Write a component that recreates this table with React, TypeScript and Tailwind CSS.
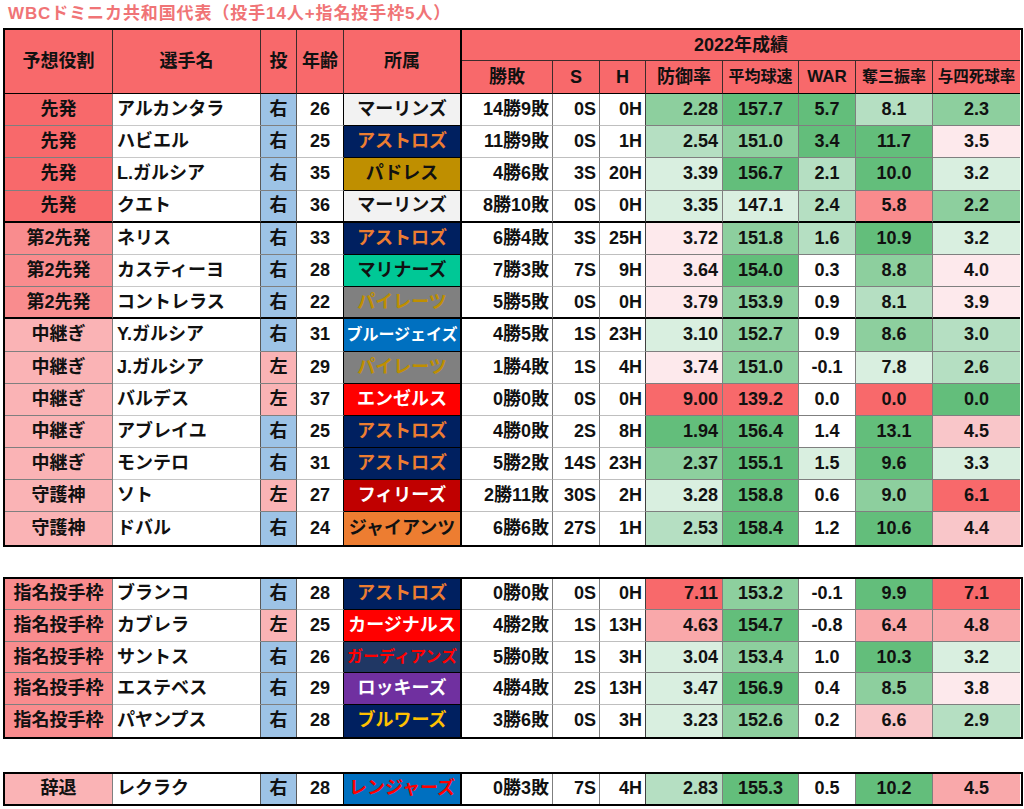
import React from "react";

type Row = [string, string, string, number, string, string, string, string, string, string, string, string, string, string];

const ROLE: Record<string, string> = {
  先発: "bg-[#f8696b]",
  第2先発: "bg-[#f98c8e]",
  中継ぎ: "bg-[#fab3b5]",
  守護神: "bg-[#fab3b5]",
  指名投手枠: "bg-[#f98c8e]",
  辞退: "bg-[#fab3b5]",
};

const TEAM: Record<string, string> = {
  マーリンズ: "bg-[#f2f2f2] text-[#111]",
  アストロズ: "bg-[#002060] text-[#ed7d31]",
  パドレス: "bg-[#bf8f00] text-[#111]",
  マリナーズ: "bg-[#00c896] text-[#111]",
  パイレーツ: "bg-[#808080] text-[#bf8f00]",
  ブルージェイズ: "bg-[#0070c0] text-white text-[16px]",
  エンゼルス: "bg-[#ff0000] text-white",
  フィリーズ: "bg-[#c00000] text-white",
  ジャイアンツ: "bg-[#ed7d31] text-[#111]",
  カージナルス: "bg-[#ff0000] text-white",
  ガーディアンズ: "bg-[#203764] text-[#ff0000] text-[16px]",
  ロッキーズ: "bg-[#7030a0] text-white",
  ブルワーズ: "bg-[#002060] text-[#ffc000]",
  レンジャーズ: "bg-[#0070c0] text-[#ff0000]",
};

// excel colour scale, green -> white -> red
const LV: Record<string, string> = {
  g4: "bg-[#63be7b]",
  g3: "bg-[#8dcf9e]",
  g2: "bg-[#b5dfc2]",
  g1: "bg-[#d9efe0]",
  w: "bg-white",
  p1: "bg-[#fde9ec]",
  p2: "bg-[#f9c6c9]",
  p3: "bg-[#f9a8aa]",
  r3: "bg-[#f98b8d]",
  r4: "bg-[#f8696b]",
};

const MAIN: Row[] = [
  ["先発", "アルカンタラ", "右", 26, "マーリンズ", "14勝9敗", "0S", "0H", "2.28", "157.7", "5.7", "8.1", "2.3", "g3 g4 g4 g2 g3"],
  ["先発", "ハビエル", "右", 25, "アストロズ", "11勝9敗", "0S", "1H", "2.54", "151.0", "3.4", "11.7", "3.5", "g2 g3 g4 g4 p1"],
  ["先発", "L.ガルシア", "右", 35, "パドレス", "4勝6敗", "3S", "20H", "3.39", "156.7", "2.1", "10.0", "3.2", "g1 g4 g2 g4 g1"],
  ["先発", "クエト", "右", 36, "マーリンズ", "8勝10敗", "0S", "0H", "3.35", "147.1", "2.4", "5.8", "2.2", "g1 g1 g2 r3 g3"],
  ["第2先発", "ネリス", "右", 33, "アストロズ", "6勝4敗", "3S", "25H", "3.72", "151.8", "1.6", "10.9", "3.2", "p1 g3 g2 g4 g1"],
  ["第2先発", "カスティーヨ", "右", 28, "マリナーズ", "7勝3敗", "7S", "9H", "3.64", "154.0", "0.3", "8.8", "4.0", "p1 g4 w g3 p1"],
  ["第2先発", "コントレラス", "右", 22, "パイレーツ", "5勝5敗", "0S", "0H", "3.79", "153.9", "0.9", "8.1", "3.9", "p1 g3 w g2 p1"],
  ["中継ぎ", "Y.ガルシア", "右", 31, "ブルージェイズ", "4勝5敗", "1S", "23H", "3.10", "152.7", "0.9", "8.6", "3.0", "g1 g3 w g3 g2"],
  ["中継ぎ", "J.ガルシア", "左", 29, "パイレーツ", "1勝4敗", "1S", "4H", "3.74", "151.0", "-0.1", "7.8", "2.6", "p1 g3 w g1 g2"],
  ["中継ぎ", "バルデス", "左", 37, "エンゼルス", "0勝0敗", "0S", "0H", "9.00", "139.2", "0.0", "0.0", "0.0", "r4 r4 w r4 g4"],
  ["中継ぎ", "アブレイユ", "右", 25, "アストロズ", "4勝0敗", "2S", "8H", "1.94", "156.4", "1.4", "13.1", "4.5", "g4 g4 w g4 p2"],
  ["中継ぎ", "モンテロ", "右", 31, "アストロズ", "5勝2敗", "14S", "23H", "2.37", "155.1", "1.5", "9.6", "3.3", "g3 g4 g1 g4 g1"],
  ["守護神", "ソト", "左", 27, "フィリーズ", "2勝11敗", "30S", "2H", "3.28", "158.8", "0.6", "9.0", "6.1", "g1 g4 w g3 r4"],
  ["守護神", "ドバル", "右", 24, "ジャイアンツ", "6勝6敗", "27S", "1H", "2.53", "158.4", "1.2", "10.6", "4.4", "g2 g4 w g4 p2"],
];

const DESIGNATED: Row[] = [
  ["指名投手枠", "ブランコ", "右", 28, "アストロズ", "0勝0敗", "0S", "0H", "7.11", "153.2", "-0.1", "9.9", "7.1", "r4 g3 w g4 r4"],
  ["指名投手枠", "カブレラ", "左", 25, "カージナルス", "4勝2敗", "1S", "13H", "4.63", "154.7", "-0.8", "6.4", "4.8", "p3 g4 w p3 p3"],
  ["指名投手枠", "サントス", "右", 26, "ガーディアンズ", "5勝0敗", "1S", "3H", "3.04", "153.4", "1.0", "10.3", "3.2", "g1 g3 w g4 g1"],
  ["指名投手枠", "エステベス", "右", 29, "ロッキーズ", "4勝4敗", "2S", "13H", "3.47", "156.9", "0.4", "8.5", "3.8", "g1 g4 w g3 p1"],
  ["指名投手枠", "パヤンプス", "右", 28, "ブルワーズ", "3勝6敗", "0S", "3H", "3.23", "152.6", "0.2", "6.6", "2.9", "g1 g3 w p2 g2"],
];

const WITHDRAWN: Row[] = [
  ["辞退", "レクラク", "右", 28, "レンジャーズ", "0勝3敗", "7S", "4H", "2.83", "155.3", "0.5", "10.2", "4.5", "g2 g4 w g4 p3"],
];

// right border / row line colour per column
const COLS = [
  { rb: "border-r border-r-[#7f7f7f]", bb: "border-b-[#7f7f7f]", al: "justify-center" },
  { rb: "border-r border-r-[#595959]", bb: "border-b-[#c8c8c8]", al: "justify-start pl-[4px]" },
  { rb: "border-r border-r-[#595959]", bb: "border-b-[#7f7f7f]", al: "justify-center" },
  { rb: "border-r border-r-black", bb: "border-b-[#bfbfbf]", al: "justify-center" },
  { rb: "border-r-2 border-r-black", bb: "border-b-black", al: "justify-center" },
  { rb: "border-r border-r-[#7f7f7f]", bb: "border-b-[#bfbfbf]", al: "justify-end pr-[3px]" },
  { rb: "border-r border-r-[#7f7f7f]", bb: "border-b-[#bfbfbf]", al: "justify-end pr-[3px]" },
  { rb: "border-r border-r-[#404040]", bb: "border-b-[#bfbfbf]", al: "justify-end pr-[3px]" },
  { rb: "border-r border-r-[#7f7f7f]", bb: "border-b-[#7f7f7f]", al: "justify-end pr-[4px]" },
  { rb: "border-r border-r-[#7f7f7f]", bb: "border-b-[#7f7f7f]", al: "justify-center" },
  { rb: "border-r border-r-[#7f7f7f]", bb: "border-b-[#7f7f7f]", al: "justify-center" },
  { rb: "border-r border-r-[#7f7f7f]", bb: "border-b-[#7f7f7f]", al: "justify-center" },
  { rb: "", bb: "border-b-[#7f7f7f]", al: "justify-center" },
];

const GRID =
  "grid grid-cols-[108px_148px_36px_47px_118px_91px_47px_46px_77px_76px_57px_77px_87px] border-2 border-black w-[1020px]";

function DataRow({ r, last, groupEnd }: { r: Row; last?: boolean; groupEnd?: boolean }) {
  const lv = r[13].split(" ");
  const bgs = [
    ROLE[r[0]],
    "bg-white",
    r[2] === "右" ? "bg-[#9dc3e6]" : "bg-[#fab3b5]",
    "bg-white",
    TEAM[r[4]],
    "bg-white",
    "bg-white",
    "bg-white",
    ...lv.map((l) => LV[l]),
  ];
  const texts = r.slice(0, 13).map(String);
  return (
    <>
      {texts.map((t, i) => (
        <div
          key={i}
          className={`flex items-center whitespace-nowrap ${COLS[i].al} ${COLS[i].rb} ${bgs[i]} ${
            last ? "" : groupEnd ? "border-b-2 border-b-black" : `border-b ${COLS[i].bb}`
          }`}
        >
          {t}
        </div>
      ))}
    </>
  );
}

function Head({ children, className = "" }: { children: React.ReactNode; className?: string }) {
  return (
    <div className={`flex items-center justify-center bg-[#f8696b] border-r border-r-[#3d2b2b] whitespace-nowrap ${className}`}>
      {children}
    </div>
  );
}

export default function App() {
  return (
    <div className="w-[1024px] min-h-[809px] bg-white text-[#111] font-bold text-[18px] font-['Liberation_Sans','Noto_Sans_CJK_JP',sans-serif]">
      <div className="h-[28px] flex items-center pl-[8px] text-[17px] tracking-[0.9px] text-[#f07476]">
        WBCドミニカ共和国代表（投手14人+指名投手枠5人）
      </div>

      <div className="ml-[3px]">
        <div className={`${GRID} grid-rows-[31px_33px] auto-rows-[32.2px]`}>
          <Head className="row-span-2 border-b border-b-black">予想役割</Head>
          <Head className="row-span-2 border-b border-b-black">選手名</Head>
          <Head className="row-span-2 border-b border-b-black">投</Head>
          <Head className="row-span-2 border-b border-b-black">年齢</Head>
          <Head className="row-span-2 border-b border-b-black border-r-2 border-r-black">所属</Head>
          <Head className="col-span-8 border-b border-b-[#3d2b2b] border-r-0">2022年成績</Head>
          <Head className="border-b border-b-black">勝敗</Head>
          <Head className="border-b border-b-black">S</Head>
          <Head className="border-b border-b-black">H</Head>
          <Head className="border-b border-b-black">防御率</Head>
          <Head className="border-b border-b-black text-[16px]">平均球速</Head>
          <Head className="border-b border-b-black text-[17px]">WAR</Head>
          <Head className="border-b border-b-black text-[16px]">奪三振率</Head>
          <Head className="border-b border-b-black border-r-0 text-[15.5px]">与四死球率</Head>
          {MAIN.map((r, i) => (
            <DataRow key={i} r={r} last={i === MAIN.length - 1} groupEnd={i === 3 || i === 6} />
          ))}
        </div>

        <div className={`${GRID} mt-[30px] auto-rows-[31.6px]`}>
          {DESIGNATED.map((r, i) => (
            <DataRow key={i} r={r} last={i === DESIGNATED.length - 1} />
          ))}
        </div>

        <div className={`${GRID} mt-[33px] auto-rows-[30px]`}>
          {WITHDRAWN.map((r, i) => (
            <DataRow key={i} r={r} last />
          ))}
        </div>
      </div>
    </div>
  );
}
